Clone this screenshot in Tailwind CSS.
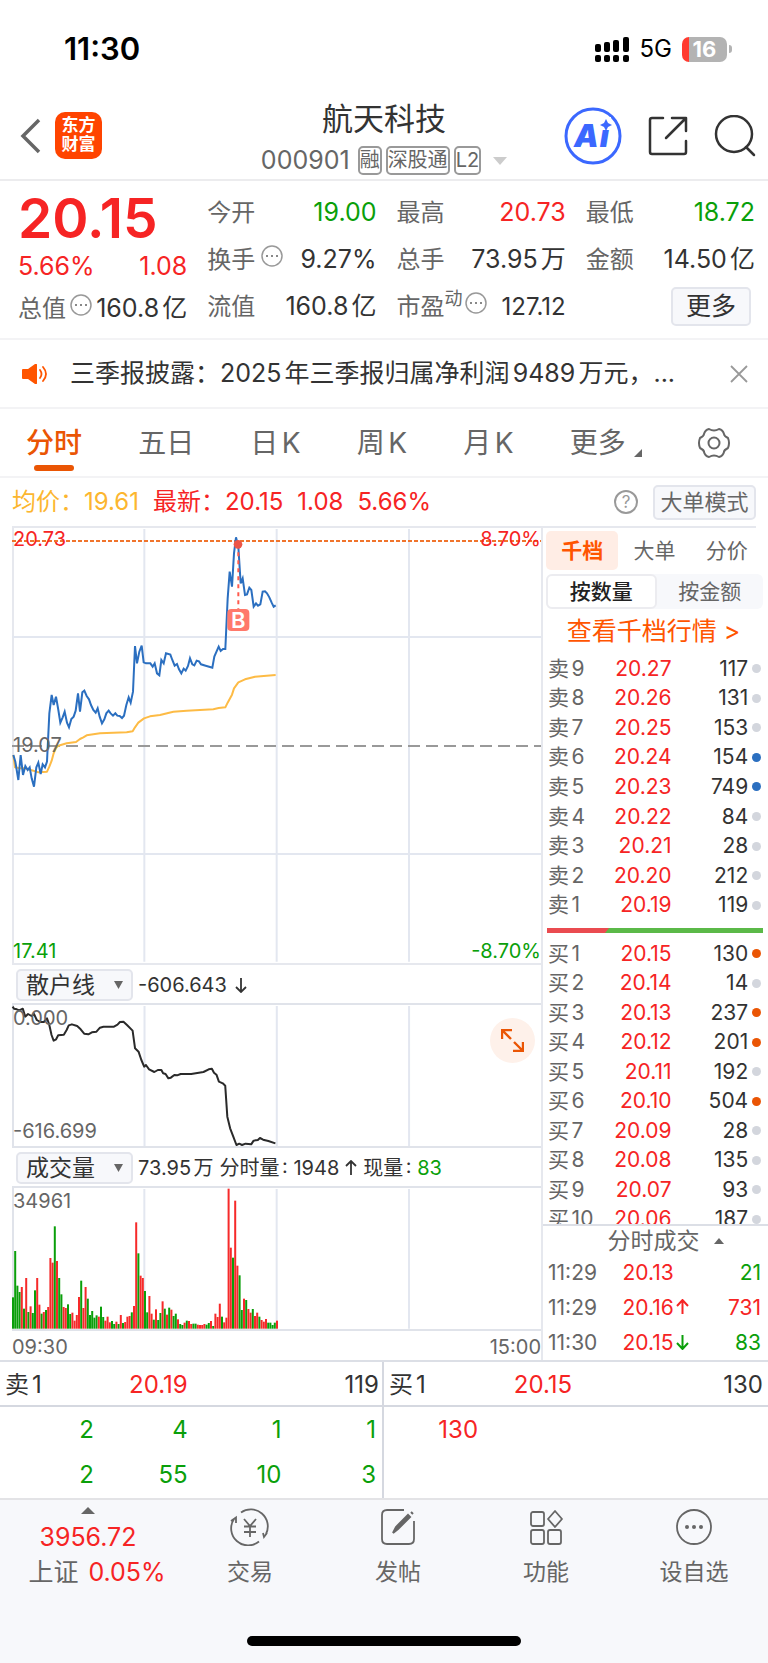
<!DOCTYPE html>
<html lang="zh-CN">
<head>
    <meta charset="UTF-8">
    <meta name="viewport" content="width=device-width, initial-scale=1.0">
    <title>航天科技 000901</title>
    <script src="https://cdn.jsdelivr.net/npm/@tailwindcss/browser@4"></script>
</head>
<body class="bg-white text-[#333] font-['Inter','Noto_Sans_CJK_SC',sans-serif] [text-autospace:normal]">
    <div class="min-h-screen flex flex-col">
        <!-- 状态栏 -->
        <div class="h-[90px] pt-2 pl-16 pr-9 flex items-center justify-between text-black">
            <span class="text-[31px] font-semibold">11:30</span>
            <div class="flex items-center gap-[10px]">
                <svg class="w-[35px] h-[25px]" viewBox="0 0 35 25">
                    <rect x="0" y="7" width="6" height="8" rx="2" /><rect x="9" y="5" width="6" height="10" rx="2" /><rect x="18" y="3" width="6" height="12" rx="2" /><rect x="28" y="0" width="6" height="15" rx="2" />
                    <rect x="0" y="18" width="6" height="7" rx="2" /><rect x="9" y="18" width="6" height="7" rx="2" /><rect x="18" y="18" width="6" height="7" rx="2" /><rect x="28" y="18" width="6" height="7" rx="2" />
                </svg>
                <span class="text-[24px]">5G</span>
                <div class="flex items-center gap-[2px]">
                    <span class="w-[45px] h-[25px] rounded-[7px] bg-linear-to-r from-[#ff3b30] from-16% to-[#b3b3b3] to-16% text-white text-[22px] leading-[25px] font-bold text-center">16</span>
                    <span class="w-[3px] h-2 rounded-r-full bg-[#b3b3b3]"></span>
                </div>
            </div>
        </div>

        <!-- 标题 -->
        <header class="h-[91px] border-b-2 border-[#ececee] pt-[2px] px-3 flex items-center">
            <div class="flex-1 flex items-center gap-[14px]">
                <button class="ml-2" aria-label="返回">
                    <svg class="w-[21px] h-9" viewBox="0 0 21 36" fill="none" stroke="#666" stroke-width="3.5"><path d="M19 2L3 18L19 34" /></svg>
                </button>
                <a href="#" class="w-[47px] h-[47px] rounded-[10px] bg-[#ff4400] text-white text-[17px] leading-[19px] font-bold text-center pt-1">东方<br>财富</a>
            </div>
            <div class="flex flex-col items-center">
                <h1 class="text-[31px] leading-[46px]">航天科技</h1>
                <div class="mt-1 flex items-center gap-1 text-[#666] text-[20px] leading-[25px]">
                    <span class="text-[25px]">000901</span>
                    <span class="ml-1 border-2 border-[#999] rounded-[5px]">融</span>
                    <span class="border-2 border-[#999] rounded-[5px]">深股通</span>
                    <span class="border-2 border-[#999] rounded-[5px]">L2</span>
                    <svg class="w-[14px] h-2 ml-2" viewBox="0 0 14 8" fill="#ccc"><path d="M0 0H14L7 8Z" /></svg>
                </div>
            </div>
            <div class="flex-1 flex items-center justify-end gap-[26px]">
                <button aria-label="Ai">
                    <svg class="w-[58px] h-[58px]" viewBox="0 0 58 58">
                        <circle cx="29" cy="29" r="27" fill="none" stroke="#3b68ff" stroke-width="3" />
                        <text x="10" y="40" font-size="31" font-weight="900" font-style="italic" fill="#3b68ff">A<tspan dx="1">i</tspan></text>
                        <rect x="35" y="10" width="12" height="12" fill="#fff" />
                        <path d="M42 12L44 16L48 18L44 20L42 24L40 20L36 18L40 16Z" fill="#3b68ff" />
                    </svg>
                </button>
                <button aria-label="分享">
                    <svg class="w-10 h-10" viewBox="0 0 40 40" fill="none" stroke="#333" stroke-width="2.5" stroke-linecap="round" stroke-linejoin="round"><path d="M15 2H4Q2 2 2 4V36Q2 38 4 38H36Q38 38 38 36V25M24 2H38V15M38 2L18 22" /></svg>
                </button>
                <button aria-label="搜索">
                    <svg class="w-[42px] h-[42px]" viewBox="0 0 42 42" fill="none" stroke="#333" stroke-width="2.5" stroke-linecap="round"><circle cx="20" cy="19" r="18" /><path d="M32 32L40 40" /></svg>
                </button>
            </div>
        </header>

        <!-- 行情 -->
        <section class="h-[159px] border-b-2 border-[#f3f3f5] pt-2 pl-[18px] pr-[13px] grid grid-cols-4 gap-x-5 text-[25px] whitespace-nowrap">
            <div>
                <div class="h-[58px] flex items-center text-[55px] font-semibold text-[#f62424]">20.15</div>
                <div class="h-[40px] flex items-center justify-between text-[#f62424]"><span>5.66%</span><span>1.08</span></div>
                <div class="h-[43px] flex items-center justify-between">
                    <span class="text-[#666] text-[24px] flex items-center">总值
                        <svg class="w-[22px] h-[22px] ml-1 mb-2" viewBox="0 0 22 22"><circle cx="11" cy="11" r="10" fill="none" stroke="#999" stroke-width="1.5" /><path d="M5 10h2v2h-2zM10 10h2v2h-2zM15 10h2v2h-2z" fill="#888" /></svg>
                    </span>
                    <span>160.8亿</span>
                </div>
            </div>
            <div>
                <div class="h-[47px] flex items-center justify-between"><span class="text-[#666] text-[24px]">今开</span><span class="text-[#0a9f0a]">19.00</span></div>
                <div class="h-[47px] flex items-center justify-between">
                    <span class="text-[#666] text-[24px] flex items-center">换手
                        <svg class="w-[22px] h-[22px] ml-[6px] mb-2" viewBox="0 0 22 22"><circle cx="11" cy="11" r="10" fill="none" stroke="#999" stroke-width="1.5" /><path d="M5 10h2v2h-2zM10 10h2v2h-2zM15 10h2v2h-2z" fill="#888" /></svg>
                    </span>
                    <span>9.27%</span>
                </div>
                <div class="h-[47px] flex items-center justify-between"><span class="text-[#666] text-[24px]">流值</span><span>160.8亿</span></div>
            </div>
            <div>
                <div class="h-[47px] flex items-center justify-between"><span class="text-[#666] text-[24px]">最高</span><span class="text-[#f62424]">20.73</span></div>
                <div class="h-[47px] flex items-center justify-between"><span class="text-[#666] text-[24px]">总手</span><span>73.95万</span></div>
                <div class="h-[47px] flex items-center justify-between">
                    <span class="text-[#666] text-[24px] flex items-center">市盈<span class="text-[18px] mb-4">动</span>
                        <svg class="w-[22px] h-[22px] ml-[2px] mb-2" viewBox="0 0 22 22"><circle cx="11" cy="11" r="10" fill="none" stroke="#999" stroke-width="1.5" /><path d="M5 10h2v2h-2zM10 10h2v2h-2zM15 10h2v2h-2z" fill="#888" /></svg>
                    </span>
                    <span class="text-[24px]">127.12</span>
                </div>
            </div>
            <div>
                <div class="h-[47px] flex items-center justify-between"><span class="text-[#666] text-[24px]">最低</span><span class="text-[#0a9f0a]">18.72</span></div>
                <div class="h-[47px] flex items-center justify-between"><span class="text-[#666] text-[24px]">金额</span><span>14.50亿</span></div>
                <div class="h-[47px] flex items-center justify-end pr-1"><button class="w-20 h-[39px] border-2 border-[#e3e5ec] rounded-[5px] bg-[#f7f8fb] leading-[35px]">更多</button></div>
            </div>
        </section>

        <!-- 公告 -->
        <div class="h-[69px] border-b-2 border-[#f3f3f5] pl-[22px] pr-5 flex items-center">
            <svg class="w-[26px] h-5" viewBox="0 0 26 20" fill="#ff5500"><path d="M0 6Q0 5 1 5H6L13 0Q15 -1 15 1V19Q15 21 13 20L6 15H1Q0 15 0 14Z" /><path d="M18 6Q21 10 18 14M21 3Q27 10 21 17" fill="none" stroke="#ff5500" stroke-width="1.8" stroke-linecap="round" /></svg>
            <a href="#" class="flex-1 ml-[22px] text-[25px] truncate">三季报披露：2025年三季报归属净利润9489万元，...</a>
            <button aria-label="关闭"><svg class="w-[18px] h-[18px]" viewBox="0 0 18 18" stroke="#999" stroke-width="1.8"><path d="M1 1L17 17M17 1L1 17" /></svg></button>
        </div>

        <!-- 周期 -->
        <nav class="h-[69px] border-b-2 border-[#f3f3f5] pl-[26px] pr-[38px] flex items-stretch justify-between text-[28px] text-[#666] whitespace-nowrap">
            <button class="relative font-medium text-[#ea5504]">分时<span class="absolute bottom-[5px] left-2 right-2 h-[6px] rounded-full bg-[#ea5504]"></span></button>
            <button>五日</button>
            <button>日K</button>
            <button>周K</button>
            <button>月K</button>
            <button class="flex items-center">更多<svg class="w-2 h-2 ml-2 mt-5" viewBox="0 0 8 8" fill="#666"><path d="M8 0V8H0Z" /></svg></button>
            <button aria-label="设置">
                <svg class="w-8 h-8" viewBox="0 0 32 32" fill="none" stroke="#666" stroke-width="2" stroke-linejoin="round"><path d="M11 2Q16 5 21 2Q25 3 26 7Q26 9 30 11Q32 16 30 21Q26 23 26 25Q25 29 21 30Q16 27 11 30Q7 29 6 25Q6 23 2 21Q0 16 2 11Q6 9 6 7Q7 3 11 2Z" /><circle cx="16" cy="16" r="5.5" /></svg>
            </button>
        </nav>

        <div class="h-[48px] px-3 flex items-center text-[24px] text-[#f62424] whitespace-nowrap">
            <span class="text-[#fcb62f]">均价：19.61</span>
            <span class="ml-[14px]">最新：20.15</span>
            <span class="ml-[14px]">1.08</span>
            <span class="ml-[14px]">5.66%</span>
            <button aria-label="帮助" class="ml-auto w-6 h-6 rounded-full border-2 border-[#999] text-[#999] text-[17px] leading-5">?</button>
            <button class="ml-[15px] w-[103px] h-[35px] border-2 border-[#e3e5ec] rounded-[5px] bg-[#f7f8fb] text-[22px] leading-[31px] text-[#666]">大单模式</button>
        </div>

        <main class="flex border-b-2 border-[#dcdfe6]">
            <!-- 左侧：图表 -->
            <div class="flex-1 pl-3 min-w-0">
                <div class="relative h-[439px] border-y-2 border-l-2 border-[#e6e8ee] text-[20px] leading-6">
                    <svg class="w-full h-full overflow-visible" viewBox="42 24 1581 1305" preserveAspectRatio="none" fill="none" stroke-width="2">
                        <g stroke="#e3e7f0">
                            <path vector-effect="non-scaling-stroke" d="M433 27V1325M830 27V1325M1227 27V1325M36 351H1623M36 1002H1623" />
                        </g>
                        <path vector-effect="non-scaling-stroke" stroke="#999" stroke-dasharray="12 6" d="M36 678H1623" />
                        <path vector-effect="non-scaling-stroke" stroke="#f0742c" stroke-dasharray="4 2" d="M36 63H1623" />
                        <polyline vector-effect="non-scaling-stroke" stroke="#fdbb45" stroke-linejoin="round" points="40,705 45,742 60,745 75,745 100,752 115,757 141,755 148,740 155,722 161,700 168,684 175,677 200,670 228,666 240,657 250,652 260,646 300,640 380,637 398,634 405,622 415,608 432,595 450,589 480,585 520,575 560,572 640,568 656,564 676,562 683,548 696,524 702,505 715,487 735,478 765,470 800,467 827,465" />
                        <polyline vector-effect="non-scaling-stroke" stroke="#2b6fc0" points="40,705 46,725 55,780 62,705 69,765 76,738 83,750 89,742 95,775 102,800 109,742 115,728 122,762 128,733 135,742 141,725 148,580 155,525 161,555 168,530 175,570 181,608 188,592 194,575 201,608 207,622 214,597 221,590 227,572 234,520 240,575 247,517 253,512 260,528 267,538 273,555 280,570 287,578 293,565 299,590 306,610 313,598 319,580 326,572 332,580 339,587 346,580 352,587 359,588 366,594 372,587 379,555 386,532 392,548 399,515 405,378 411,430 418,395 425,377 431,427 438,430 451,430 458,440 464,430 471,460 478,466 484,420 491,430 498,400 511,404 517,420 524,437 531,432 537,448 544,460 551,446 557,452 564,438 570,415 577,433 583,436 590,422 597,424 603,433 617,437 630,441 637,443 643,410 656,380 662,393 669,387 676,387 683,235 689,155 696,200 702,100 708,52 715,80 722,190 728,175 735,225 741,223 748,203 754,210 761,260 768,250 774,257 781,253 788,215 795,214 801,220 808,232 815,248 821,260 827,256" />
                        <path vector-effect="non-scaling-stroke" stroke="#ff5a4d" stroke-dasharray="4 4" d="M715 73V268" />
                        <circle cx="714" cy="73" r="13" fill="#ec5548" />
                        <rect x="682" y="267" width="66" height="66" rx="12" fill="#ff796b" />
                        <text x="715" y="324" font-size="66" font-weight="600" text-anchor="middle" fill="#fff">B</text>
                    </svg>
                    <span class="absolute -left-px -top-px text-[#f62424]">20.73</span>
                    <span class="absolute right-0 -top-px text-[#f62424]">8.70%</span>
                    <span class="absolute -left-px top-[205px] text-[#666]">19.07</span>
                    <span class="absolute -left-px bottom-0 text-[#0a9f0a]">17.41</span>
                    <span class="absolute right-0 bottom-0 text-[#0a9f0a]">-8.70%</span>
                </div>

                <div class="h-[38px] pt-px pl-1 flex items-center text-[20px]">
                    <div class="relative">
                        <select aria-label="指标一" class="appearance-none w-[117px] h-8 pl-2 border-2 border-[#e3e5ec] rounded-[5px] bg-[#f7f8fb] text-[23px] leading-7"><option>散户线</option><option>成交量</option></select>
                        <svg class="absolute right-[10px] top-3 w-[9px] h-2 pointer-events-none" viewBox="0 0 9 8" fill="#666"><path d="M0 0H9L4.5 8Z" /></svg>
                    </div>
                    <span class="ml-[5px]">-606.643</span>
                    <svg class="w-3 h-4 ml-2" viewBox="0 0 12 16" fill="none" stroke="#333" stroke-width="1.8"><path d="M6 1V15M1 10L6 15L11 10" /></svg>
                </div>

                <div class="relative h-[145px] border-y-2 border-l-2 border-[#e0e3ea] text-[20px] leading-6 text-[#666]">
                    <svg class="w-full h-full overflow-visible" viewBox="40 195 1502 423" preserveAspectRatio="none" fill="none" stroke-width="2">
                        <path vector-effect="non-scaling-stroke" stroke="#e3e7f0" d="M412 198V618M789 198V618M1166 198V618" />
                        <polyline vector-effect="non-scaling-stroke" stroke="#2a2a2a" stroke-linejoin="round" points="36,200 40,206 48,208 55,211 65,206 72,230 80,222 90,228 97,222 105,240 115,246 125,246 134,235 140,252 147,285 153,302 160,298 166,286 182,284 190,270 196,256 205,253 220,258 230,268 240,281 252,283 262,277 275,275 285,263 295,260 325,260 335,254 342,246 352,245 362,255 378,272 385,325 395,335 403,360 411,380 416,375 425,388 440,396 450,390 460,390 465,400 472,402 480,415 487,413 497,405 505,406 515,402 545,402 580,396 595,388 604,386 610,398 617,404 624,425 635,430 642,437 648,530 656,565 665,590 674,615 682,611 690,615 700,611 716,613 723,602 735,600 741,594 750,599 765,603 785,610" />
                    </svg>
                    <span class="absolute -left-px top-[1px]">0.000</span>
                    <span class="absolute -left-px bottom-[3px]">-616.699</span>
                    <button aria-label="放大" class="absolute right-[6px] top-[13px] w-[45px] h-[45px] rounded-full bg-[#fef1ea] flex items-center justify-center">
                        <svg class="w-[23px] h-[23px]" viewBox="0 0 23 23" fill="none" stroke="#ea5504" stroke-width="2.4"><path d="M1 10V1H11M1 1L10 10M22 13V22H12M22 22L13 13" /></svg>
                    </button>
                </div>

                <div class="h-[38px] pt-px pl-1 flex items-center text-[20px] whitespace-nowrap">
                    <div class="relative">
                        <select aria-label="指标二" class="appearance-none w-[117px] h-8 pl-2 border-2 border-[#e3e5ec] rounded-[5px] bg-[#f7f8fb] text-[23px] leading-7"><option>成交量</option><option>散户线</option></select>
                        <svg class="absolute right-[10px] top-3 w-[9px] h-2 pointer-events-none" viewBox="0 0 9 8" fill="#666"><path d="M0 0H9L4.5 8Z" /></svg>
                    </div>
                    <span class="ml-[5px]">73.95万</span>
                    <span class="ml-[6px]">分时量: 1948</span>
                    <svg class="w-3 h-4 mx-[6px]" viewBox="0 0 12 16" fill="none" stroke="#333" stroke-width="1.8"><path d="M6 15V1M1 6L6 1L11 6" /></svg>
                    <span>现量: <span class="text-[#0a9f0a]">83</span></span>
                </div>

                <div class="relative h-[145px] border-y-2 border-l-2 border-[#e0e3ea] text-[20px] leading-6 text-[#666]">
                    <svg class="w-full h-full overflow-visible" viewBox="42 24 1581 423" preserveAspectRatio="none">
                        <path vector-effect="non-scaling-stroke" stroke="#e3e7f0" stroke-width="2" d="M433 27V446M830 27V446M1227 27V446" />
                        <g id="volume"></g>
                    </svg>
                    <span class="absolute -left-px top-[1px]">34961</span>
                </div>
                <div class="h-[29px] pt-[2px] flex items-center justify-between text-[20px] leading-6 text-[#666]"><span>09:30</span><span>15:00</span></div>
            </div>

            <!-- 右侧：盘口 -->
            <aside class="w-[227px] border-l-2 border-[#e6e8ee] flex flex-col text-[21px]">
                <div class="border-t-2 border-[#e6e8ee] mr-3"></div>
                <div class="pt-[3px] pl-[3px] pr-[5px] flex text-[#666]">
                    <button class="flex-1 h-[39px] rounded-[5px] bg-[#ffede5] text-[#ff5500] font-bold">千档</button>
                    <button class="flex-1 h-[39px]">大单</button>
                    <button class="flex-1 h-[39px]">分价</button>
                </div>
                <div class="mt-1 ml-[3px] mr-[5px] flex rounded-[6px] bg-[#f7f8fb] text-[#666]">
                    <button class="flex-1 h-[35px] rounded-[6px] border-2 border-[#ececf0] bg-white text-[#222] font-medium leading-[31px]">按数量</button>
                    <button class="flex-1 h-[35px]">按金额</button>
                </div>
                <a href="#" class="h-[45px] pr-1 flex items-center justify-center text-[25px] text-[#ff5500]">查看千档行情&nbsp;&gt;</a>
                <table class="table-fixed h-[266px] ml-[5px] mr-[7px] leading-7 whitespace-nowrap">
                    <colgroup><col class="w-[25%]"><col class="w-[33%]"><col class="w-[36%]"><col class="w-[6%]"></colgroup>
                    <tbody id="sell"></tbody>
                </table>
                <svg class="w-[216px] h-[5px] mt-[8px] mb-[6px] ml-1" viewBox="0 0 216 5" preserveAspectRatio="none"><path d="M0 0H216V5H0Z" fill="#5bb948" /><path d="M0 0H62L58 5H0Z" fill="#ea4b50" /></svg>
                <div class="h-[285px] overflow-hidden">
                    <div class="pl-[5px] pr-[7px]">
                        <table class="table-fixed w-full h-[295px] leading-7 whitespace-nowrap">
                            <colgroup><col class="w-[25%]"><col class="w-[33%]"><col class="w-[36%]"><col class="w-[6%]"></colgroup>
                            <tbody id="buy"></tbody>
                        </table>
                    </div>
                </div>
                <button class="h-8 pl-5 border-t-2 border-[#dcdfe6] flex items-center justify-center gap-[14px] text-[23px] leading-7 text-[#666]">分时成交<svg class="w-[10px] h-[6px]" viewBox="0 0 10 6" fill="#666"><path d="M5 0L10 6H0Z" /></svg></button>
                <table class="table-fixed ml-[5px] mr-[7px] leading-7 h-[104px] whitespace-nowrap">
                    <tbody>
                        <tr><td class="w-[35%] text-[#666]">11:29</td><td class="w-[40%] text-[#f62424]">20.13</td><td class="text-right text-[#0a9f0a]">21</td></tr>
                        <tr><td class="text-[#666]">11:29</td><td class="text-[#f62424]">20.16<svg class="inline w-[13px] h-4 ml-[2px] mb-1" viewBox="0 0 13 16" fill="none" stroke="#f62424" stroke-width="2"><path d="M6.5 15V1M1 7L6.5 1L12 7" /></svg></td><td class="text-right text-[#f62424]">731</td></tr>
                        <tr><td class="text-[#666]">11:30</td><td class="text-[#f62424]">20.15<svg class="inline w-[13px] h-4 ml-[2px] mb-1" viewBox="0 0 13 16" fill="none" stroke="#0a9f0a" stroke-width="2"><path d="M6.5 1V15M1 9L6.5 15L12 9" /></svg></td><td class="text-right text-[#0a9f0a]">83</td></tr>
                    </tbody>
                </table>
            </aside>
        </main>

        <!-- 买卖队列 -->
        <section class="grid grid-cols-2 text-[24px] leading-8 text-right">
            <table class="table-fixed w-full border-r-2 border-[#d5d8e0]">
                <colgroup><col class="w-[24.5%]"><col class="w-[24.5%]"><col class="w-[24.5%]"><col></colgroup>
                <thead><tr class="h-[44px] border-b-2 border-[#d5d8e0]"><th class="pt-[3px] pl-[5px] text-left font-normal">卖1</th><td class="pt-[3px] text-[#f62424]">20.19</td><td></td><td class="pt-[3px] pr-[3px]">119</td></tr></thead>
                <tbody class="text-[#0a9f0a]">
                    <tr class="h-[46px]"><td>2</td><td>4</td><td>1</td><td class="pr-[6px]">1</td></tr>
                    <tr class="h-[46px]"><td>2</td><td>55</td><td>10</td><td class="pr-[6px]">3</td></tr>
                </tbody>
            </table>
            <table class="table-fixed w-full">
                <colgroup><col class="w-[24.5%]"><col class="w-[24.5%]"><col class="w-[24.5%]"><col></colgroup>
                <thead><tr class="h-[44px] border-b-2 border-[#d5d8e0]"><th class="pt-[3px] pl-[5px] text-left font-normal">买1</th><td class="pt-[3px] text-[#f62424]">20.15</td><td></td><td class="pt-[3px] pr-[5px]">130</td></tr></thead>
                <tbody class="text-[#f62424]">
                    <tr class="h-[46px]"><td>130</td><td></td><td></td><td></td></tr>
                    <tr class="h-[46px]"><td></td><td></td><td></td><td></td></tr>
                </tbody>
            </table>
        </section>

        <!-- 底部导航 -->
        <footer class="flex-1 border-t-2 border-[#e3e3e6] bg-[#f7f8fb] flex flex-col justify-between pb-[17px]">
            <nav class="flex text-[23px] leading-8 text-[#666]">
                <a href="#" class="w-44 pt-[7px] flex flex-col items-center text-[25px]">
                    <svg class="w-[14px] h-[7px]" viewBox="0 0 14 7" fill="#666"><path d="M7 0L14 7H0Z" /></svg>
                    <span class="mt-[7px] text-[#f62424]">3956.72</span>
                    <span class="mt-[3px] pl-[18px] flex gap-[10px]">上证<span class="text-[#f62424]">0.05%</span></span>
                </a>
                <a href="#" class="flex-1 pt-2 flex flex-col items-center gap-[10px]">
                    <svg class="w-10 h-[38px]" viewBox="0 0 40 38" fill="none" stroke="#666" stroke-width="1.8"><path d="M11 4.500A17 17 0 0 1 36 26M37 25L34 29L33 25M29 33.500A17 17 0 0 1 4 11M1 13L6 9.500V15M14 11L20 18L26 11M14 18.500H26M14 24H26M20 18V29" /></svg>
                    <span>交易</span>
                </a>
                <a href="#" class="flex-1 pt-2 flex flex-col items-center gap-[10px]">
                    <svg class="w-9 h-[38px]" viewBox="0 0 36 38" fill="none" stroke="#666" stroke-width="1.8"><path d="M24 2H7Q2 2 2 7V31Q2 36 7 36H29Q34 36 34 31V13" /><path d="M13 25L16 19L28 7L30 9L18 21ZM31 4L33 6" stroke-width="2" fill="#666" /></svg>
                    <span>发帖</span>
                </a>
                <a href="#" class="flex-1 pt-2 flex flex-col items-center gap-[10px]">
                    <svg class="w-9 h-[38px]" viewBox="0 0 36 38" fill="none" stroke="#666" stroke-width="1.8" stroke-linejoin="round"><rect x="3" y="4" width="13" height="14" rx="2" /><rect x="3" y="22" width="13" height="14" rx="2" /><rect x="20" y="22" width="13" height="14" rx="2" /><path d="M27 3L34 11L27 19L20 11Z" /></svg>
                    <span>功能</span>
                </a>
                <a href="#" class="flex-1 pt-2 flex flex-col items-center gap-[10px]">
                    <svg class="w-9 h-[38px]" viewBox="0 0 36 38" fill="none" stroke="#666" stroke-width="1.8"><circle cx="18" cy="19" r="17" /><g fill="#666" stroke="none"><circle cx="11" cy="19" r="2" /><circle cx="18" cy="19" r="2" /><circle cx="25" cy="19" r="2" /></g></svg>
                    <span>设自选</span>
                </a>
            </nav>
            <div class="w-[274px] h-[10px] rounded-full bg-black mx-auto"></div>
        </footer>
    </div>

    <script>
        // 盘口数据: [档位, 价格, 数量, 标记颜色]
        const gray = 'bg-[#d3d6dd]', blue = 'bg-[#2b6fc0]', orange = 'bg-[#ea5504]';
        const sell = [
            ['卖9', '20.27', 117, gray], ['卖8', '20.26', 131, gray], ['卖7', '20.25', 153, gray],
            ['卖6', '20.24', 154, blue], ['卖5', '20.23', 749, blue], ['卖4', '20.22', 84, gray],
            ['卖3', '20.21', 28, gray], ['卖2', '20.20', 212, gray], ['卖1', '20.19', 119, gray]
        ];
        const buy = [
            ['买1', '20.15', 130, orange], ['买2', '20.14', 14, gray], ['买3', '20.13', 237, orange],
            ['买4', '20.12', 201, orange], ['买5', '20.11', 192, gray], ['买6', '20.10', 504, orange],
            ['买7', '20.09', 28, gray], ['买8', '20.08', 135, gray], ['买9', '20.07', 93, gray], ['买10', '20.06', 187, gray]
        ];
        function renderRows(id, rows) {
            document.getElementById(id).innerHTML = rows.map(r => `
                <tr><td class="text-[#666]">${r[0]}</td><td class="text-right text-[#f62424]">${r[1]}</td><td class="text-right">${r[2]}</td><td><span class="block ml-auto w-[9px] h-[9px] rounded-full ${r[3]}"></span></td></tr>`).join('');
        }
        renderRows('sell', sell);
        renderRows('buy', buy);

        // 成交量柱: 柱顶坐标 + 颜色 (r 涨 / g 跌)
        const volume = '352g 213g 317g 336g 321r 386g 294r 396g 379r 399g 331g 294r 374r 401g 396r 390g 381r 234r 248r 139g 243r 294g 343g 381r 384r 373g 402g 398r 422r 405r 351r 302g 384r 321r 356g 405g 393g 413g 406g 410r 380g 411g 422r 410r 427r 423g 432g 425r 432g 405r 429g 426r 410r 408r 397g 378r 127r 220g 287r 294r 333g 397g 348r 401r 419g 388r 420g 399g 364r 386g 404r 383g 389r 408g 401g 418r 432g 435g 428r 422g 423r 432r 431g 431g 434r 435r 435r 432r 434g 429g 423r 438g 401r 411r 371r 410g 427r 413r 26r 203r 233g 62r 257r 286g 390g 356r 360g 387r 398r 387g 408r 398r 410g 420r 425r 417r 428g 428g 435g 428g 422r'.split(' ');
        document.getElementById('volume').innerHTML = volume.map((v, i) => {
            const top = parseInt(v);
            return `<rect x="${36 + i * 6.6}" y="${top}" width="6" height="${446 - top}" fill="${v.endsWith('r') ? '#f62a2a' : '#0a9f0a'}"/>`;
        }).join('');
    </script>
</body>
</html>
